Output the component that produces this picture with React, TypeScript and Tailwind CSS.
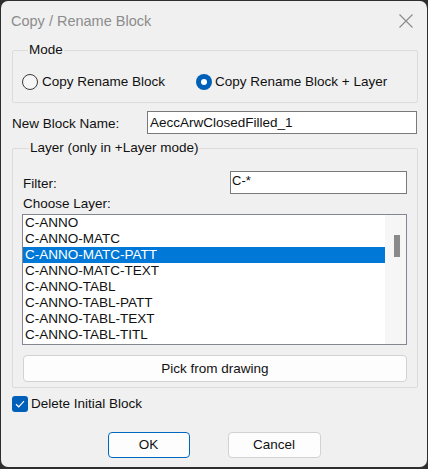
import React from "react";

const items = [
  "C-ANNO",
  "C-ANNO-MATC",
  "C-ANNO-MATC-PATT",
  "C-ANNO-MATC-TEXT",
  "C-ANNO-TABL",
  "C-ANNO-TABL-PATT",
  "C-ANNO-TABL-TEXT",
  "C-ANNO-TABL-TITL",
];

export default function App() {
  return (
    <div
      className="w-[428px] h-[469px] bg-[#2e2e2e] pt-[1px] pl-[1px] overflow-hidden"
      style={{ fontFamily: '"Liberation Sans", Arial, sans-serif' }}
    >
      <div className="w-[426px] h-[466px] bg-[#f0f0f0] rounded-[7px] flex flex-col text-[13.5px] text-[#111]">
        {/* Title bar */}
        <div className="h-[40px] flex items-center justify-between pl-[10px] pr-[14px]">
          <span className="text-[14.5px] text-[#8c8c8c] leading-[20px]">Copy / Rename Block</span>
          <svg width="14" height="14" viewBox="0 0 14 14" className="mt-[-1px]">
            <path d="M0.5 0.5 L13.5 13.5 M13.5 0.5 L0.5 13.5" stroke="#8a8a8a" strokeWidth="1.1" fill="none" />
          </svg>
        </div>

        <div className="pl-[11px] pr-[9px] flex flex-col">
          {/* Mode */}
          <fieldset className="mt-[1px] border border-[#dcdcdc] rounded-[2px] pl-[9px] pt-[16px] pb-[12px]">
            <legend className="ml-[6px] px-[1px] leading-[16px]">Mode</legend>
            <div className="flex items-center h-[16px] leading-[16px]">
              <div className="w-[174px] flex items-center">
                <span className="w-[16px] h-[16px] rounded-full border border-[#3a3a3a] bg-[#f6f6f6] box-border" />
                <span className="ml-[4px]">Copy Rename Block</span>
              </div>
              <div className="flex items-center">
                <span className="w-[16px] h-[16px] rounded-full bg-[#005fb8] flex items-center justify-center">
                  <span className="w-[6px] h-[6px] rounded-full bg-white" />
                </span>
                <span className="ml-[3px]">Copy Rename Block + Layer</span>
              </div>
            </div>
          </fieldset>

          {/* New block name */}
          <div className="mt-[8px] flex items-center h-[23px]">
            <span className="w-[135px] leading-[16px] mt-[3px]">New Block Name:</span>
            <div className="w-[270px] h-[23px] bg-white border border-[#7a7a7a] pl-[2px] flex items-center leading-[16px]">
              AeccArwClosedFilled_1
            </div>
          </div>

          {/* Layer group */}
          <fieldset className="mt-[6px] border border-[#dcdcdc] rounded-[2px] px-[10px] pt-[15px] pb-[5px]">
            <legend className="ml-[6px] px-[1px] leading-[16px]">Layer (only in +Layer mode)</legend>
            <div className="flex items-center justify-between h-[23px]">
              <span className="leading-[16px] mt-[3px]">Filter:</span>
              <div className="w-[177px] h-[23px] bg-white border border-[#7a7a7a] pl-[1px] flex items-start pt-[1px] leading-[16px] text-[13px]">
                C-*
              </div>
            </div>
            <div className="mt-[2px] leading-[16px]">Choose Layer:</div>
            <div className="mt-[2px] -ml-[1px] h-[131px] border border-[#828790] bg-white flex">
              <div className="flex-1 flex flex-col text-[13.5px]">
                {items.map((it, i) => (
                  <div
                    key={it}
                    className={
                      i === 2
                        ? "h-[16px] leading-[16px] pl-[2px] bg-[#0078d7] text-white"
                        : "h-[16px] leading-[16px] pl-[2px] text-[#111]"
                    }
                  >
                    {it}
                  </div>
                ))}
              </div>
              <div className="w-[21px] bg-[#f6f6f6] flex justify-center pt-[20px]">
                <div className="w-[6px] h-[22px] bg-[#8a8a8a] ml-[2px]" />
              </div>
            </div>
            <button className="mt-[10px] w-full h-[27px] bg-[#fdfdfd] border border-[#d2d2d2] rounded-[4px] flex items-center justify-center leading-[16px]">
              Pick from drawing
            </button>
          </fieldset>

          {/* Checkbox */}
          <div className="mt-[8px] flex items-center h-[16px]">
            <span className="w-[16px] h-[16px] rounded-[3px] bg-[#005fb8] flex items-center justify-center">
              <svg width="10" height="8" viewBox="0 0 10 8">
                <path d="M1 4.2 L3.7 6.8 L9 1.2" stroke="white" strokeWidth="1.2" fill="none" />
              </svg>
            </span>
            <span className="ml-[3px] leading-[16px]">Delete Initial Block</span>
          </div>

          {/* Buttons */}
          <div className="mt-[20px] flex justify-center gap-[38px] pr-[2px]">
            <button className="w-[82px] h-[26px] bg-[#fdfdfd] border border-[#0067c0] rounded-[4px] flex items-center justify-center leading-[16px]">
              OK
            </button>
            <button className="w-[93px] h-[26px] bg-[#fdfdfd] border border-[#d2d2d2] rounded-[4px] flex items-center justify-center leading-[16px]">
              Cancel
            </button>
          </div>
        </div>
      </div>
    </div>
  );
}
